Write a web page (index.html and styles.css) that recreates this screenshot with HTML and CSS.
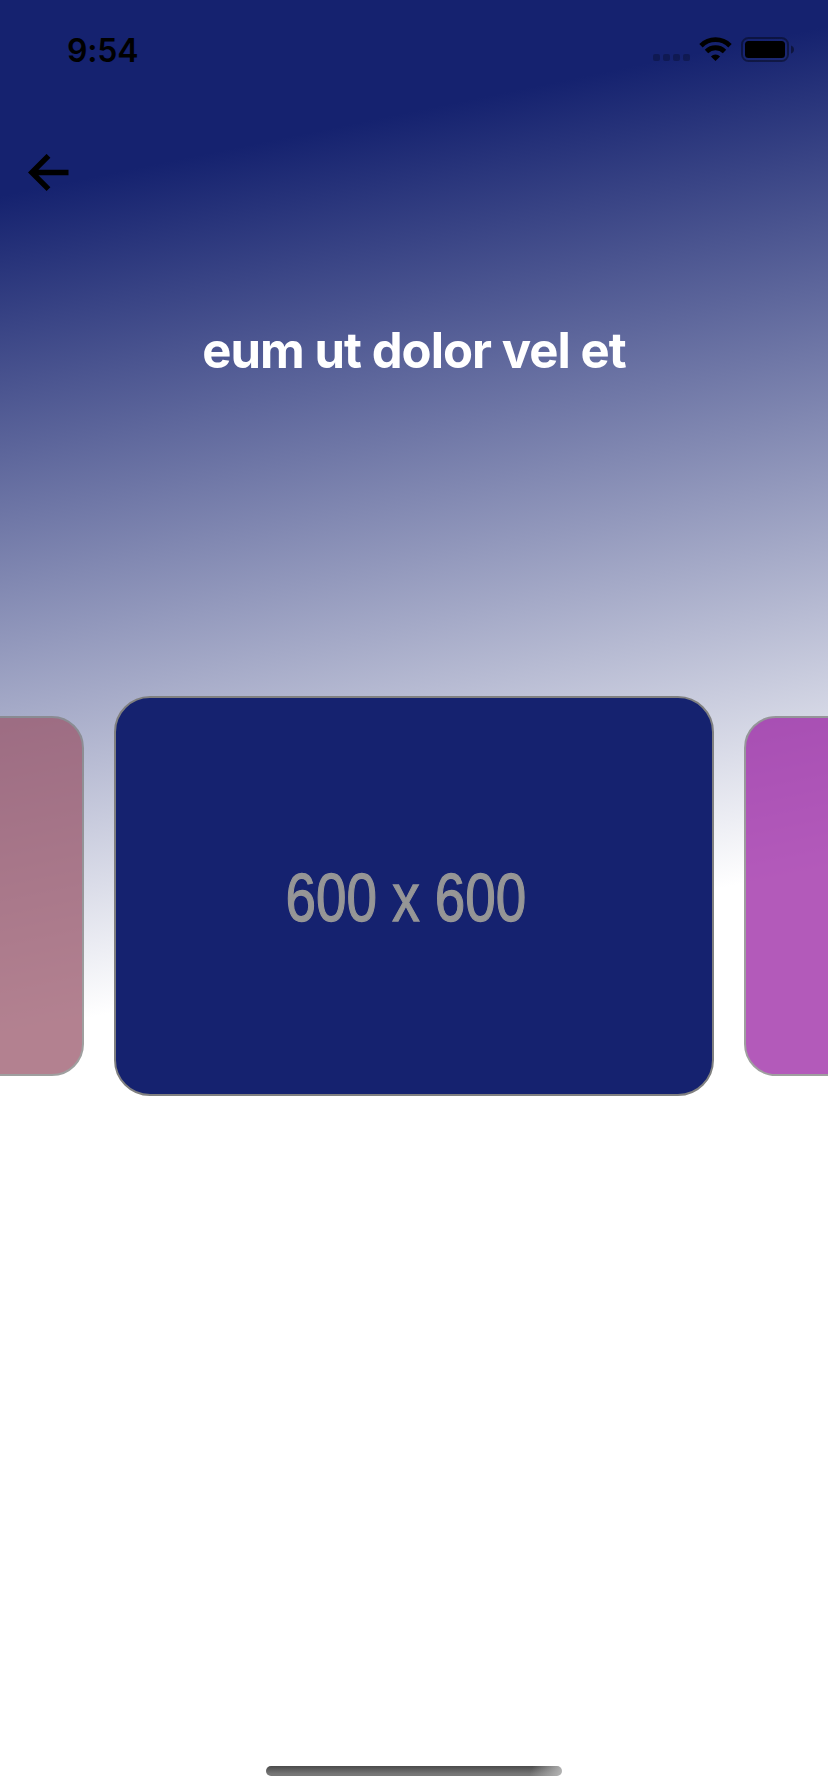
FILE: index.html
```html
<!DOCTYPE html>
<html lang="en">
<head>
<meta charset="utf-8">
<title>Album</title>
<link rel="stylesheet" href="styles.css">
</head>
<body>
<div class="screen">
  <header class="status">
    <span class="time">9:54</span>
    <svg class="indicators" width="142" height="28" viewBox="0 0 142 28">
      <g fill="#000" fill-opacity=".25">
        <rect x="0" y="18" width="7" height="7" rx="2"/>
        <rect x="10" y="18" width="7" height="7" rx="2"/>
        <rect x="20" y="18" width="7" height="7" rx="2"/>
        <rect x="30" y="18" width="7" height="7" rx="2"/>
      </g>
      <g fill="none" stroke="#000" stroke-width="4.800">
        <path d="M48 9.700A20.500 20.500 0 0 1 77 9.700"/>
        <path d="M53.500 15.500A12.700 12.700 0 0 1 71.500 15.500"/>
      </g>
      <path d="M62.500 25L57.900 20.400A6.500 6.500 0 0 1 67.100 20.400Z"/>
      <rect x="89" y="2" width="46" height="23" rx="6.500" fill="none" stroke="#000" stroke-opacity=".4" stroke-width="2"/>
      <rect x="92" y="5" width="40" height="17" rx="3.500"/>
      <path d="M138 9.500Q141 10.500 141 13.500T138 17.500Z" fill-opacity=".45"/>
    </svg>
  </header>
  <nav class="nav">
    <svg width="42" height="40" viewBox="0 0 42 40">
      <path d="M40.500 18.500H4M20.500 1.800L3.800 18.500L20.500 35.200" fill="none" stroke="#000" stroke-width="5.400"/>
    </svg>
  </nav>
  <h1 class="title">eum ut dolor vel et</h1>
  <main class="carousel">
    <div class="card side rose"></div>
    <div class="card active">
      <svg width="596" height="396" viewBox="0 0 596 396">
        <text class="label" transform="translate(169.500 222.500) scale(.8 1)">600 x 600</text>
      </svg>
    </div>
    <div class="card side violet"></div>
  </main>
  <footer class="home"><div class="home-bar"></div></footer>
</div>
</body>
</html>
```
FILE: styles.css
```css
* { box-sizing: border-box; }
body { margin: 0; }
.screen {
  width: 828px;
  height: 1792px;
  overflow: hidden;
  display: flex;
  flex-direction: column;
  background: linear-gradient(168.4deg, #15226f 192px, #fff 1015px);
  font-family: Inter, "Liberation Sans", sans-serif;
}
.status {
  height: 100px;
  padding: 0 33px 0 67px;
  display: flex;
  align-items: center;
  justify-content: space-between;
}
.time { padding-top: 1px; font-size: 32px; font-weight: 600; line-height: 40px; letter-spacing: -.2px; }
.indicators { display: block; }
.nav { height: 94px; padding: 54px 0 0 28px; }
.nav svg { display: block; }
.title {
  height: 502px;
  margin: 0;
  padding-top: 127px;
  color: #fff;
  text-align: center;
  font-size: 49px;
  line-height: 60px;
  font-weight: 700;
  letter-spacing: -.95px;
}
.carousel {
  display: flex;
  align-items: center;
  justify-content: center;
  gap: 30px;
}
.card {
  flex: none;
  width: 600px;
  height: 400px;
  overflow: hidden;
  border: 2px solid #808080;
  border-radius: 36px;
  background: #15226f;
}
.card svg { display: block; }
.side { width: 540px; height: 360px; border-radius: 32px; opacity: .75; }
.rose { background: #9a586c; }
.violet { background: #9a23a4; }
.label { font: 68.500px "Liberation Sans", sans-serif; fill: #969696; stroke: #969696; stroke-width: 1.3px; }
.home { margin-top: auto; padding-bottom: 16px; display: flex; justify-content: center; }
.home-bar {
  width: 296px;
  height: 10px;
  border-radius: 5px;
  background: linear-gradient(110deg, transparent 89%, #b0b0b0 99%), linear-gradient(#4b4b4b, #777 80%);
}
```
